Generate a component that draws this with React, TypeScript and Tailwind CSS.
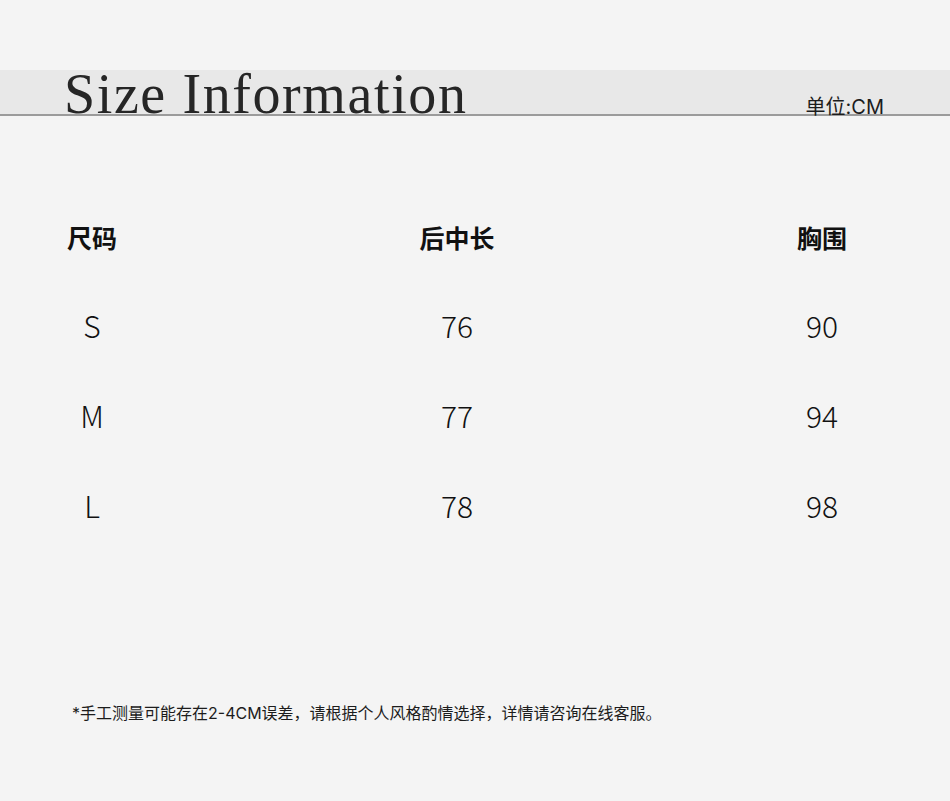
import React from 'react';

const rows = [
  { size: 'S', length: '76', chest: '90' },
  { size: 'M', length: '77', chest: '94' },
  { size: 'L', length: '78', chest: '98' },
];

const cjk = "font-['Noto_Sans_CJK_SC','Noto_Sans',sans-serif]";
const mixed = "font-['Inter','Noto_Sans_CJK_SC',sans-serif]";

export default function App() {
  return (
    <div className="w-[950px] h-[801px] bg-[#f4f4f4] pt-[70px] flex flex-col overflow-hidden">
      <div className="h-[46px] bg-[#e8e8e8] border-b-2 border-[#9b9b9b] flex items-end pl-[64px] pr-[66px]">
        <h1 className="font-['Liberation_Serif',serif] text-[56px] leading-none tracking-[1.6px] text-[#262626] mb-[-8px]">
          Size Information
        </h1>
        <span className={`${mixed} ml-auto text-[20px] leading-none text-[#1c1c1c] mb-[-3px]`}>
          单位:CM
        </span>
      </div>

      <div className={`${cjk} mt-[109px] pl-[67px] pr-[103px] text-[#111]`}>
        <div className="flex justify-between text-[25px] leading-[25px] font-bold">
          <div className="w-[50px] flex justify-center whitespace-nowrap">尺码</div>
          <div className="w-[50px] flex justify-center whitespace-nowrap">后中长</div>
          <div className="w-[50px] flex justify-center whitespace-nowrap">胸围</div>
        </div>
        <div className="mt-[60px] flex flex-col gap-[60px] text-[30px] leading-[30px] font-light">
          {rows.map((r) => (
            <div key={r.size} className="flex justify-between">
              <div className="w-[50px] text-center">{r.size}</div>
              <div className="w-[50px] text-center">{r.length}</div>
              <div className="w-[50px] text-center">{r.chest}</div>
            </div>
          ))}
        </div>
      </div>

      <p className={`${mixed} mt-[185px] pl-[72px] text-[16px] leading-[16px] text-[#1c1c1c]`}>
        *手工测量可能存在2-4CM误差，请根据个人风格酌情选择，详情请咨询在线客服。
      </p>
    </div>
  );
}
